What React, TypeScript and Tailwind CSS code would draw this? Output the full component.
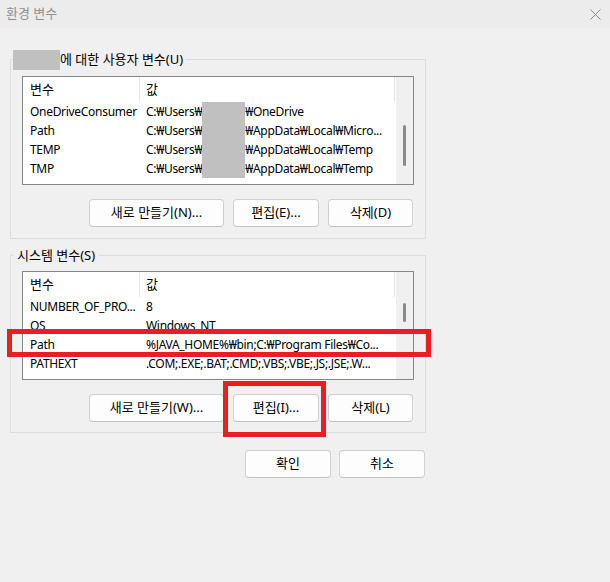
import React from "react";

type Row = { name: string; value: React.ReactNode };

const Mask = () => (
  <span className="inline-block w-[43px] h-[19px] bg-[#c0c0c0] align-top" />
);

const USER_ROWS: Row[] = [
  { name: "OneDriveConsumer", value: <>C:₩Users₩<Mask />₩OneDrive</> },
  { name: "Path", value: <>C:₩Users₩<Mask />₩AppData₩Local₩Micro...</> },
  { name: "TEMP", value: <>C:₩Users₩<Mask />₩AppData₩Local₩Temp</> },
  { name: "TMP", value: <>C:₩Users₩<Mask />₩AppData₩Local₩Temp</> },
];

const SYSTEM_ROWS: Row[] = [
  { name: "NUMBER_OF_PRO...", value: "8" },
  { name: "OS", value: "Windows_NT" },
  { name: "Path", value: "%JAVA_HOME%₩bin;C:₩Program Files₩Co..." },
  { name: "PATHEXT", value: ".COM;.EXE;.BAT;.CMD;.VBS;.VBE;.JS;.JSE;.W..." },
];

function VarList({ rows, thumbTop, thumbHeight }: { rows: Row[]; thumbTop: string; thumbHeight: string }) {
  return (
    <div className="flex w-[392px] h-[109px] border border-[#868686] bg-white overflow-hidden">
      {/* columns */}
      <div className="w-[373px] flex flex-col">
        <div className="flex h-[25px] shrink-0 items-center text-[13px]">
          <div className="w-[116px] pl-[7px]">변수</div>
          <div className="w-px h-full bg-[#e5e5e5]" />
          <div className="flex-1 pl-[6px]">값</div>
          <div className="w-px h-full bg-[#e5e5e5] mr-px" />
        </div>
        {rows.map((r) => (
          <div key={r.name} className="flex h-[19px] shrink-0 text-[12px] leading-[19px] tracking-[-0.3px]">
            <div className="w-[116px] pl-[7px] whitespace-nowrap overflow-hidden">{r.name}</div>
            <div className="w-px" />
            <div className="flex-1 pl-[6px] whitespace-nowrap overflow-hidden">{r.value}</div>
          </div>
        ))}
      </div>
      {/* scroll track */}
      <div className="w-[17px] bg-[#f0f0f0] flex justify-center">
        <div className={`w-[3px] rounded-full bg-[#8a8a8a] ${thumbTop} ${thumbHeight}`} />
      </div>
    </div>
  );
}

function Btn({ children, w }: { children: React.ReactNode; w: string }) {
  return (
    <button
      className={`${w} h-[28px] rounded-[4px] border border-[#d0d0d0] border-b-[#c2c2c2] bg-[#fdfdfd] text-[13px] text-black flex items-center justify-center`}
    >
      {children}
    </button>
  );
}

export default function App() {
  return (
    <div className="relative w-[610px] h-[582px] bg-[#f0f0f0] overflow-hidden text-[13px] text-black font-['Noto_Sans','Noto_Sans_CJK_KR',sans-serif]">
      {/* title bar */}
      <div className="h-[28px] flex items-center justify-between pl-[6px] pr-[9px] bg-[#ececec]">
        <span className="text-[#8f8f8f] text-[13px]">환경 변수</span>
        <svg width="11" height="11" viewBox="0 0 11 11" aria-hidden="true">
          <path d="M0.5 0.5 L10.5 10.5 M10.5 0.5 L0.5 10.5" stroke="#8a8a8a" strokeWidth="1" fill="none" />
        </svg>
      </div>

      <div className="pl-[10px] pt-[31px]">
        {/* user variables */}
        <div className="relative w-[416px] h-[180px] border border-[#dcdcdc] pt-[16px] pl-[11px]">
          <div className="absolute -top-[10px] left-[2px] h-[20px] flex items-center bg-[#f0f0f0] pr-[3px]">
            <span className="inline-block w-[47px] h-[20px] bg-[#c0c0c0]" />
            <span>에 대한 사용자 변수(U)</span>
          </div>
          <VarList rows={USER_ROWS} thumbTop="mt-[48px]" thumbHeight="h-[41px]" />
          <div className="flex justify-end gap-[9px] pr-[12px] mt-[14px]">
            <Btn w="w-[135px]">새로 만들기(N)...</Btn>
            <Btn w="w-[86px]">편집(E)...</Btn>
            <Btn w="w-[85px]">삭제(D)</Btn>
          </div>
        </div>

        {/* system variables */}
        <div className="relative w-[416px] h-[178px] border border-[#dcdcdc] pt-[15px] pl-[11px] mt-[16px]">
          <div className="absolute -top-[10px] left-[2px] h-[20px] flex items-center bg-[#f0f0f0] px-[4px]">
            <span>시스템 변수(S)</span>
          </div>
          <VarList rows={SYSTEM_ROWS} thumbTop="mt-[31px]" thumbHeight="h-[19px]" />
          <div className="flex justify-end gap-[9px] pr-[12px] mt-[14px]">
            <Btn w="w-[135px]">새로 만들기(W)...</Btn>
            <Btn w="w-[86px]">편집(I)...</Btn>
            <Btn w="w-[85px]">삭제(L)</Btn>
          </div>
        </div>

        {/* dialog buttons */}
        <div className="w-[416px] flex justify-end gap-[8px] pr-[1px] mt-[17px]">
          <Btn w="w-[86px]">확인</Btn>
          <Btn w="w-[86px]">취소</Btn>
        </div>
      </div>

      {/* red annotation boxes */}
      <div className="absolute left-[7px] top-[329px] w-[424px] h-[28px] border-[5px] border-[#ec1c24]" />
      <div className="absolute left-[223px] top-[381px] w-[103px] h-[56px] border-[5px] border-[#ec1c24]" />
    </div>
  );
}
